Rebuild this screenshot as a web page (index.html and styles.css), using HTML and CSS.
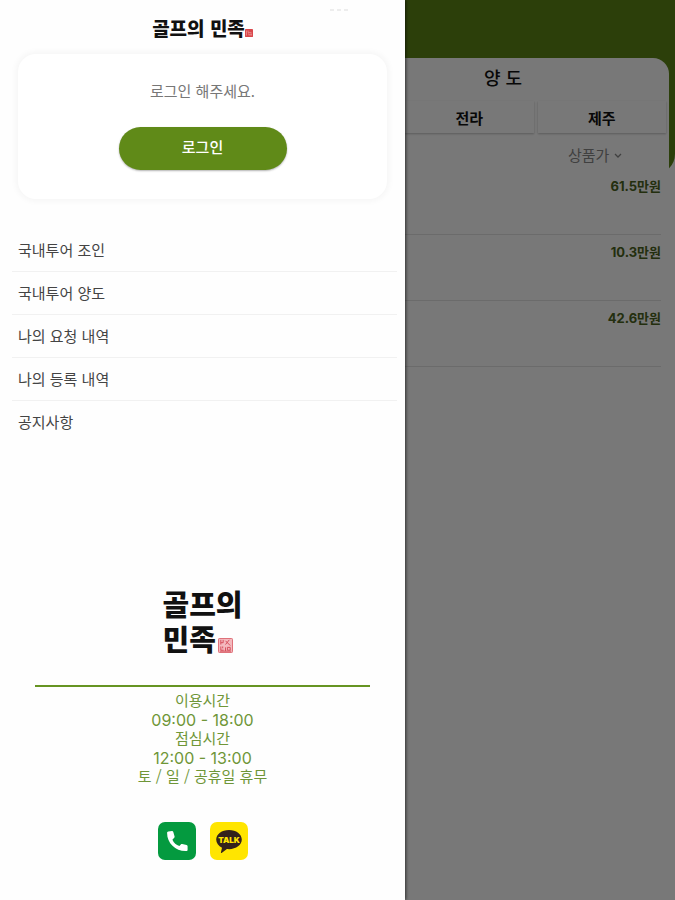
FILE: index.html
```html
<!DOCTYPE html>
<html lang="ko">
<head>
<meta charset="utf-8">
<meta name="viewport" content="width=device-width, initial-scale=1">
<title>골프의 민족</title>
<link rel="stylesheet" href="styles.css">
</head>
<body>
<div class="app">
  <aside class="drawer">
    <svg class="status-dots" viewBox="0 0 18 4" aria-hidden="true"><path d="M0 2h4M7 2h4M14 2h4" stroke="#e8e8e8" stroke-width="1.500"/></svg>
    <header class="brand">
      <span>골프의 민족</span>
      <svg class="brand-seal" viewBox="0 0 21 21" aria-hidden="true"><rect width="21" height="21" rx="1" fill="#d9474b"/><path d="M4 4v13M8 4v5h9M8 13h3v4M14 12v5M17 12v5" fill="none" stroke="#f3b3b3" stroke-width="1.5"/></svg>
    </header>
    <section class="login-card">
      <p class="login-text">로그인 해주세요.</p>
      <button class="login-button" type="button">로그인</button>
    </section>
    <nav class="menu">
      <a href="#join">국내투어 조인</a>
      <a href="#transfer">국내투어 양도</a>
      <a href="#requests">나의 요청 내역</a>
      <a href="#posts">나의 등록 내역</a>
      <a href="#notice">공지사항</a>
    </nav>
    <footer class="footer">
      <div class="logo">골프의<br>민족<svg class="logo-seal" viewBox="0 0 16 16" aria-hidden="true"><rect x=".5" y=".5" width="15" height="15" rx="1" fill="#f4b9be" stroke="#dc6670"/><path d="M3 2v5M5.500 2v3H3M8 3l5 5M12 2 8 7M3 9v4h3M5 9v2M8 10v4M10 10h3v3h-3zM2 14h12" fill="none" stroke="#d34b58"/></svg></div>
      <div class="hours">
        <p>이용시간</p>
        <p class="time">09:00 - 18:00</p>
        <p>점심시간</p>
        <p class="time">12:00 - 13:00</p>
        <p>토 / 일 / 공휴일 휴무</p>
      </div>
      <div class="contacts">
        <a href="#call" aria-label="전화">
          <svg viewBox="0 0 38 38"><rect width="38" height="38" rx="7" fill="#049a3f"/><path d="M10.300 9.600 14 9c.7 0 1.100.3 1.300.9l1.300 4.500c.1.600 0 1-.4 1.400l-1.800 1.900c1.500 3.300 3.700 5.300 7 6.300l1.400-1.500c.5-.4.900-.5 1.400-.4l4.400.9c.7.200 1 .6 1 1.300v3.500c0 .8-.4 1.200-1.200 1.200C18 29.500 9 21.500 9.100 11c0-.9.400-1.300 1.200-1.400z" fill="#fff"/></svg>
        </a>
        <a href="#talk" aria-label="카카오톡">
          <svg viewBox="0 0 38 38"><rect width="38" height="38" rx="7" fill="#ffe500"/><path d="M19 8c-7.200 0-12.800 4.200-12.800 9.600 0 3.500 2.300 6.500 5.800 8.200l-1.100 4.700c-.1.500.3.600.7.400l5.300-3.800c.7.100 1.400.1 2.100.1 7.200 0 12.800-4.200 12.800-9.600S26.200 8 19 8z" fill="#33221c"/><text class="talk-text" x="19" y="21" text-anchor="middle">TALK</text></svg>
        </a>
      </div>
    </footer>
  </aside>
  <main class="listing">
    <section class="sheet">
      <h1>양 도</h1>
      <div class="tabs">
        <button type="button">전라</button>
        <button type="button">제주</button>
      </div>
      <div class="sort">
        <select aria-label="정렬"><option>상품가</option></select>
        <svg viewBox="0 0 8 6" aria-hidden="true"><path d="m1 1 3 3 3-3" fill="none" stroke="#888" stroke-width="1.300"/></svg>
      </div>
      <ul class="prices">
        <li>61.5만원</li>
        <li>10.3만원</li>
        <li>42.6만원</li>
      </ul>
    </section>
    <div class="scrim"></div>
  </main>
</div>
</body>
</html>
```
FILE: styles.css
```css
* {
  box-sizing: border-box;
}

body,
h1,
p,
ul {
  margin: 0;
  padding: 0;
}

body {
  font-family: "Noto Sans CJK KR", "Noto Sans", sans-serif;
  font-size: 15px;
  color: #444;
  background: #fff;
}

button,
select {
  font: inherit;
  border: 0;
}

a {
  color: inherit;
  text-decoration: none;
}

svg {
  display: block;
}

.app {
  display: grid;
  grid-template-columns: 3fr 2fr;
  min-height: 100vh;
}

/* Drawer */
.drawer {
  position: relative;
  z-index: 1;
  display: flex;
  flex-direction: column;
  background: #fefefe;
  box-shadow: 1px 0 3px rgba(0, 0, 0, 0.6);
}

.status-dots {
  position: absolute;
  top: 8px;
  right: 57px;
  width: 18px;
  height: 4px;
}

.brand {
  display: flex;
  justify-content: center;
  align-items: center;
  height: 54px;
  font-size: 19px;
  font-weight: 900;
  color: #111;
}

.brand-seal {
  width: 8px;
  height: 8px;
  margin-top: 12px;
}

.login-card {
  display: flex;
  flex-direction: column;
  align-items: center;
  gap: 24px;
  margin: 0 18px;
  padding: 25px 16px 29px;
  border-radius: 18px;
  background: #fff;
  box-shadow: 0 0 6px 2px rgba(0, 0, 0, 0.04);
}

.login-text {
  line-height: 24px;
  color: #777;
}

.login-button {
  width: 168px;
  height: 43px;
  padding: 0 0 4px;
  border-radius: 22px;
  background: #608a18;
  color: #fff;
  font-weight: 500;
  box-shadow: 0 1px 2px rgba(0, 0, 0, 0.3);
}

.menu {
  display: flex;
  flex-direction: column;
  margin: 30px 8px 0 12px;
}

.menu a {
  padding: 9px 6px;
  line-height: 24px;
  border-bottom: 1px solid #f1f1f1;
}

.menu a:last-child {
  border-bottom: 0;
}

.footer {
  display: flex;
  flex-direction: column;
  align-items: center;
  margin-top: auto;
  padding: 0 35px 40px;
}

.logo {
  padding-bottom: 29px;
  font-size: 29px;
  line-height: 35px;
  font-weight: 900;
  color: #111;
}

.logo-seal {
  display: inline-block;
  width: 15px;
  height: 15px;
  margin-left: 2px;
  vertical-align: -2px;
}

.hours {
  align-self: stretch;
  padding-top: 4px;
  border-top: 2px solid #669422;
  color: #6f9638;
  text-align: center;
  line-height: 18px;
}

.time {
  padding-top: 2px;
  font-family: Inter, "Noto Sans", sans-serif;
  font-size: 16px;
}

.contacts {
  display: flex;
  gap: 14px;
  margin-top: 37px;
}

.contacts svg {
  width: 38px;
  height: 38px;
}

.talk-text {
  font-family: Inter, sans-serif;
  font-size: 8px;
  font-weight: 900;
  fill: #ffe500;
}

/* Listing behind the drawer */
.listing {
  position: relative;
  padding: 58px 6px 0 0;
}

.listing::before {
  content: "";
  position: absolute;
  inset: 0 0 auto;
  height: 174px;
  border-bottom-right-radius: 20px;
  background: #5e8717;
}

.sheet {
  position: relative;
  min-height: 100%;
  border-top-right-radius: 16px;
  background: #fff;
}

.sheet h1 {
  padding: 5px 68px 0 0;
  font-size: 18px;
  line-height: 28px;
  font-weight: 500;
  color: #111;
  text-align: center;
}

.tabs {
  display: grid;
  grid-template-columns: 1fr 1fr;
  gap: 4px;
  padding: 10px 3px 0 0;
}

.tabs button {
  height: 32px;
  padding: 0;
  background: #fff;
  color: #111;
  font-weight: 700;
  box-shadow: 0 1px 2px rgba(0, 0, 0, 0.25);
}

.sort {
  display: flex;
  justify-content: flex-end;
  align-items: center;
  gap: 4px;
  padding: 9px 47px 0 0;
}

.sort select {
  appearance: none;
  height: 24px;
  padding: 0;
  background: transparent;
  color: #888;
}

.sort svg {
  width: 8px;
  height: 6px;
  margin-top: 4px;
}

.prices {
  list-style: none;
  padding: 3px 8px 0 0;
}

.prices li {
  height: 66px;
  padding-top: 7px;
  border-bottom: 1px solid #e4e4e4;
  font-family: Inter, "Noto Sans CJK KR", sans-serif;
  font-size: 13px;
  line-height: 20px;
  font-weight: 700;
  color: #4c6420;
  text-align: right;
}

.scrim {
  position: absolute;
  inset: 0;
  background: rgba(0, 0, 0, 0.53);
}
```
